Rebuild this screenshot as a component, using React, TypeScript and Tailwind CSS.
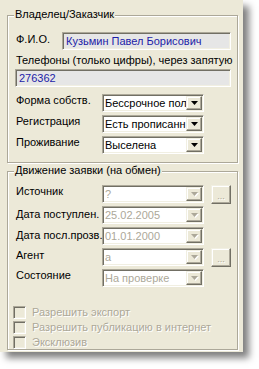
import React from "react";

const sunken =
  "border border-t-[#ACA899] border-l-[#ACA899] border-b-white border-r-white shadow-[inset_1px_1px_0_#716F64,inset_-1px_-1px_0_#F1EFE2]";
const raised =
  "border border-t-[#F1EFE2] border-l-[#F1EFE2] border-b-[#716F64] border-r-[#716F64] shadow-[inset_-1px_-1px_0_#ACA899,inset_1px_1px_0_#fff]";
const groupBox =
  "relative ml-[7px] w-[231px] border border-[#ACA899] shadow-[inset_1px_1px_0_#fff,1px_1px_0_#fff]";
const embossed = "text-[#ACA899] [text-shadow:1px_1px_0_#fff]";

function Arrow({ disabled }: { disabled?: boolean }) {
  return (
    <svg width="7" height="4" viewBox="0 0 7 4" className={disabled ? "drop-shadow-[1px_1px_0_#fff]" : ""}>
      <path d="M0 0h7L3.5 4z" fill={disabled ? "#ACA899" : "#000"} />
    </svg>
  );
}

function Combo({ value, disabled }: { value: string; disabled?: boolean }) {
  return (
    <div className={`flex h-[18px] w-[102px] shrink-0 bg-white p-[1px] ${sunken}`}>
      <span
        className={`flex-1 overflow-hidden whitespace-nowrap pl-[1px] leading-[14px] ${
          disabled ? "text-[#ACA899]" : "text-black"
        }`}
      >
        {value}
      </span>
      <span className={`flex h-full w-[16px] shrink-0 items-center justify-center bg-[#ECE9D8] ${raised}`}>
        <Arrow disabled={disabled} />
      </span>
    </div>
  );
}

function Row({
  label,
  value,
  disabled,
  dots,
  labelTop = 0,
}: {
  label: string;
  value: string;
  disabled?: boolean;
  dots?: boolean;
  labelTop?: number;
}) {
  return (
    <div className="flex h-[18px] items-start pl-[8px]">
      <span
        className={`w-[86px] shrink-0 whitespace-nowrap leading-[13px] ${
          labelTop === 2 ? "mt-[2px]" : labelTop === 1 ? "mt-[1px]" : "mt-0"
        }`}
      >
        {label}
      </span>
      <Combo value={value} disabled={disabled} />
      {dots && (
        <span
          className={`ml-[7px] flex h-[19px] w-[20px] items-start justify-center bg-[#ECE9D8] pt-[5px] text-[9px] leading-[10px] ${raised} ${embossed}`}
        >
          ...
        </span>
      )}
    </div>
  );
}

function Check({ label }: { label: string }) {
  return (
    <div className="flex h-[15px] items-center pl-[5px]">
      <span className={`h-[13px] w-[13px] shrink-0 bg-[#ECE9D8] ${sunken}`} />
      <span className={`ml-[6px] whitespace-nowrap leading-[13px] ${embossed}`}>{label}</span>
    </div>
  );
}

export default function App() {
  return (
    <div
      className="h-[369px] w-[259px] overflow-hidden bg-white text-[11px] text-black"
      style={{ fontFamily: '"Liberation Sans", Arial, sans-serif' }}
    >
      <div className="h-[352px] w-[243px] bg-[#ECE9D8] pt-[15px] shadow-[6px_6px_7px_rgba(0,0,0,0.5)]">
        <div className={`${groupBox} h-[148px] pt-[16px]`}>
          <span className="absolute left-[6px] top-[-8px] bg-[#ECE9D8] px-[1px] leading-[13px]">
            Владелец/Заказчик
          </span>
          <div className="flex h-[18px] items-start pl-[8px]">
            <span className="mt-[1px] w-[46px] shrink-0 leading-[13px]">Ф.И.О.</span>
            <div
              className={`h-[18px] w-[169px] overflow-hidden whitespace-nowrap bg-[#E6E6E6] pl-[3px] leading-[16px] text-[#1C1CA8] ${sunken}`}
            >
              Кузьмин Павел Борисович
            </div>
          </div>
          <div className="mt-[4px] whitespace-nowrap pl-[8px] leading-[13px]">
            Телефоны (только цифры), через запятую
          </div>
          <div
            className={`ml-[7px] mt-[2px] h-[18px] w-[216px] bg-[#E6E6E6] pl-[3px] leading-[16px] text-[#1C1CA8] ${sunken}`}
          >
            276362
          </div>
          <div className="mt-[7px] flex flex-col gap-[3px]">
            <Row label="Форма собств." value="Бессрочное пол" />
            <Row label="Регистрация" value="Есть прописанн" />
            <Row label="Проживание" value="Выселена" />
          </div>
        </div>

        <div className={`${groupBox} mt-[8px] h-[179px] pt-[13px]`}>
          <span className="absolute left-[6px] top-[-8px] bg-[#ECE9D8] px-[1px] leading-[13px]">
            Движение заявки (на обмен)
          </span>
          <div className="flex flex-col gap-[3px]">
            <Row label="Источник" value="?" disabled dots />
            <Row label="Дата поступлен." value="25.02.2005" disabled labelTop={2} />
            <Row label="Дата посл.прозв." value="01.01.2000" disabled labelTop={2} />
            <Row label="Агент" value="а" disabled dots labelTop={1} />
            <Row label="Состояние" value="На проверке" disabled />
          </div>
          <div className="mt-[18px] flex flex-col">
            <Check label="Разрешить экспорт" />
            <Check label="Разрешить публикацию в интернет" />
            <Check label="Эксклюзив" />
          </div>
        </div>
      </div>
    </div>
  );
}
